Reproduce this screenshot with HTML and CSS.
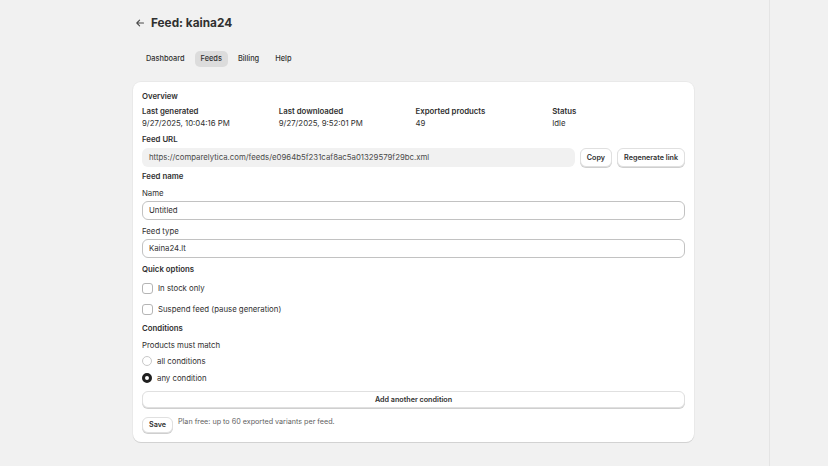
FILE: index.html
```html
<!DOCTYPE html>
<html lang="en">
<head>
<meta charset="utf-8">
<title>Feed: kaina24</title>
<link rel="stylesheet" href="styles.css">
</head>
<body>
<div class="frame">
  <main class="main">
    <header class="page-header">
      <span class="back" aria-label="Back">
        <svg width="10" height="10" viewBox="0 0 10 10"><path d="M8.5 5H1.8M4.6 2.2L1.8 5l2.8 2.8" fill="none" stroke="#4a4a4a" stroke-width="1.1" stroke-linecap="round" stroke-linejoin="round"/></svg>
      </span>
      <h1 class="title">Feed: kaina24</h1>
    </header>
    <nav class="tabs">
      <span class="tab">Dashboard</span>
      <span class="tab active">Feeds</span>
      <span class="tab">Billing</span>
      <span class="tab">Help</span>
    </nav>
    <section class="card">
      <div class="heading h-overview">Overview</div>
      <div class="stats">
        <div class="stat"><div class="stat-label">Last generated</div><div class="stat-value">9/27/2025, 10:04:16 PM</div></div>
        <div class="stat"><div class="stat-label">Last downloaded</div><div class="stat-value">9/27/2025, 9:52:01 PM</div></div>
        <div class="stat"><div class="stat-label">Exported products</div><div class="stat-value">49</div></div>
        <div class="stat"><div class="stat-label">Status</div><div class="stat-value">Idle</div></div>
      </div>
      <div class="heading h-url">Feed URL</div>
      <div class="url-row">
        <div class="url-field">https://comparelytica.com/feeds/e0964b5f231caf8ac5a01329579f29bc.xml</div>
        <button class="btn">Copy</button>
        <button class="btn">Regenerate link</button>
      </div>
      <div class="heading h-feedname">Feed name</div>
      <div class="label l-name">Name</div>
      <div class="input i-name">Untitled</div>
      <div class="label l-type">Feed type</div>
      <div class="input i-type">Kaina24.lt</div>
      <div class="heading h-quick">Quick options</div>
      <label class="check c-stock"><span class="box"></span>In stock only</label>
      <label class="check c-suspend"><span class="box"></span>Suspend feed (pause generation)</label>
      <div class="heading h-cond">Conditions</div>
      <div class="label l-match">Products must match</div>
      <label class="radio r-all"><span class="dot"></span>all conditions</label>
      <label class="radio r-any"><span class="dot on"></span>any condition</label>
      <button class="btn btn-wide">Add another condition</button>
      <div class="save-row">
        <button class="btn btn-save">Save</button>
        <span class="note">Plan free: up to 60 exported variants per feed.</span>
      </div>
    </section>
  </main>
  <div class="divider"></div>
  <aside class="side"></aside>
</div>
</body>
</html>
```
FILE: styles.css
```css
* { box-sizing: border-box; }
html, body { margin: 0; padding: 0; }
body {
  background: #f1f1f1;
  font-family: Inter, "Noto Sans", sans-serif;
  font-size: 7.8px;
  line-height: 12px;
  color: #303030;
  width: 828px;
  height: 466px;
  overflow: hidden;
}
.frame { display: flex; height: 466px; }
.main { width: 769px; padding-left: 133px; }
.divider { width: 1px; background: #e4e4e4; }
.side { flex: 1; }

.page-header { display: flex; align-items: center; height: 20px; margin-top: 13px; }
.back { width: 10px; height: 10px; margin-left: 2px; display: flex; }
.title { margin: 0 0 0 6px; font-size: 11.8px; font-weight: 650; line-height: 20px; color: #303030; }

.tabs { display: flex; gap: 4px; margin-top: 18px; margin-left: 7px; }
.tab { padding: 2px 6px; height: 16px; line-height: 12px; border-radius: 5px; font-weight: 550; font-size: 7.4px; color: #303030; }
.tab.active { background: #dcdcdc; }

.card {
  width: 561px;
  margin-top: 15px;
  background: #fff;
  border-radius: 8px;
  box-shadow: 0 1px 0 #d2d2d2, 0 0 0 1px rgba(0,0,0,0.03);
  padding: 8px 9px 9px;
  display: flex;
  flex-direction: column;
}
.heading { font-weight: 600; }
.stats { display: grid; grid-template-columns: repeat(4, 1fr); column-gap: 4px; margin-top: 3px; }
.stat-label { font-weight: 600; }
.h-url { margin-top: 4px; }
.url-row { display: flex; gap: 5px; margin-top: 3px; height: 19px; }
.url-field { flex: 1; background: #f1f1f1; border-radius: 6px; padding: 3px 7px; line-height: 13px; color: #4a4a4a; }
.btn {
  font-family: inherit; font-size: 7.2px; font-weight: 600; color: #303030;
  background: #fff; border: 1px solid #e0e0e0; border-radius: 6px;
  box-shadow: 0 1px 0 #cfcfcf; padding: 0 6px; height: 19px; line-height: 12px; cursor: pointer;
}
.h-feedname { margin-top: 3px; }
.l-name { margin-top: 5px; }
.input { margin-top: 2px; height: 19px; border: 1px solid #c2c2c2; border-radius: 6px; padding: 2px 6px; line-height: 13px; }
.l-type { margin-top: 5px; }
.h-quick { margin-top: 5px; }
.check, .radio { display: flex; align-items: center; gap: 5px; height: 12px; }
.box { width: 11px; height: 11px; border: 1px solid #b5b5b5; border-radius: 3px; background: #fff; }
.c-stock { margin-top: 7px; }
.c-suspend { margin-top: 9px; }
.h-cond { margin-top: 7px; }
.l-match { margin-top: 5px; }
.dot { width: 10px; height: 10px; border: 1px solid #c8c8c8; border-radius: 50%; }
.dot.on { border: 3px solid #1f1f1f; }
.r-all { margin-top: 4px; }
.r-any { margin-top: 5px; }
.btn-wide { margin-top: 7px; height: 17px; width: 100%; }
.save-row { display: flex; align-items: flex-start; gap: 5px; margin-top: 9px; }
.btn-save { height: 16px; padding: 0 6px; }
.note { color: #616161; font-size: 7.2px; line-height: 10px; }
```
